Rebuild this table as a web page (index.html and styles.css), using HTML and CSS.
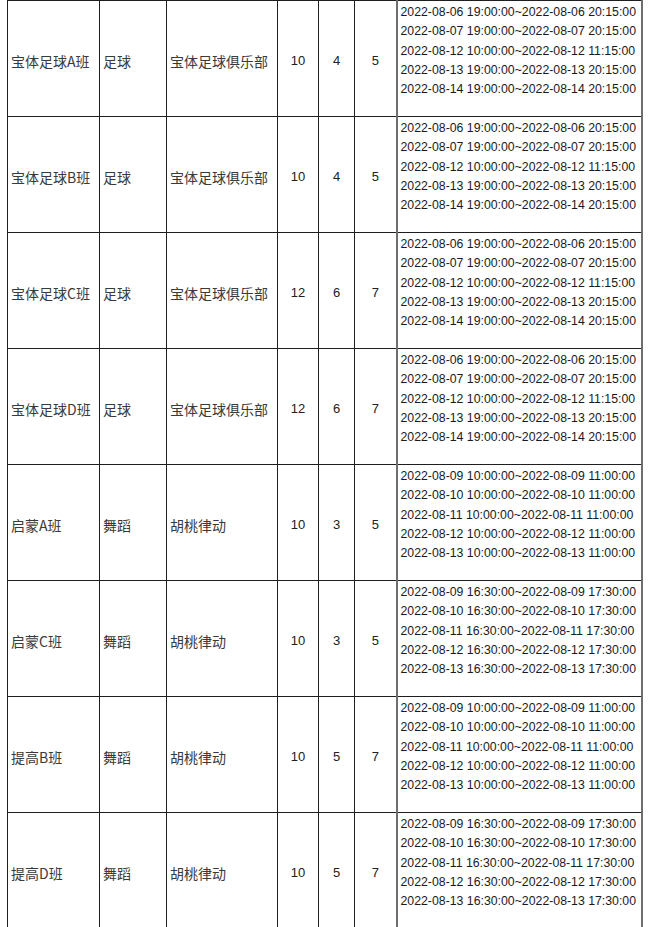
FILE: index.html
```html
<!DOCTYPE html>
<html lang="zh">
<head>
<meta charset="utf-8">
<link rel="stylesheet" href="styles.css">
</head>
<body>
<table class="schedule">
  <colgroup>
    <col class="c-name"><col class="c-type"><col class="c-club"><col class="c-num1"><col class="c-num2"><col class="c-num3"><col class="c-time">
  </colgroup>
  <tbody>
    <tr>
      <td class="txt">宝体足球A班</td><td class="txt">足球</td><td class="txt">宝体足球俱乐部</td>
      <td class="num">10</td><td class="num">4</td><td class="num">5</td>
      <td class="time"><div>2022-08-06 19:00:00~2022-08-06 20:15:00</div><div>2022-08-07 19:00:00~2022-08-07 20:15:00</div><div>2022-08-12 10:00:00~2022-08-12 11:15:00</div><div>2022-08-13 19:00:00~2022-08-13 20:15:00</div><div>2022-08-14 19:00:00~2022-08-14 20:15:00</div></td>
    </tr>
    <tr>
      <td class="txt">宝体足球B班</td><td class="txt">足球</td><td class="txt">宝体足球俱乐部</td>
      <td class="num">10</td><td class="num">4</td><td class="num">5</td>
      <td class="time"><div>2022-08-06 19:00:00~2022-08-06 20:15:00</div><div>2022-08-07 19:00:00~2022-08-07 20:15:00</div><div>2022-08-12 10:00:00~2022-08-12 11:15:00</div><div>2022-08-13 19:00:00~2022-08-13 20:15:00</div><div>2022-08-14 19:00:00~2022-08-14 20:15:00</div></td>
    </tr>
    <tr>
      <td class="txt">宝体足球C班</td><td class="txt">足球</td><td class="txt">宝体足球俱乐部</td>
      <td class="num">12</td><td class="num">6</td><td class="num">7</td>
      <td class="time"><div>2022-08-06 19:00:00~2022-08-06 20:15:00</div><div>2022-08-07 19:00:00~2022-08-07 20:15:00</div><div>2022-08-12 10:00:00~2022-08-12 11:15:00</div><div>2022-08-13 19:00:00~2022-08-13 20:15:00</div><div>2022-08-14 19:00:00~2022-08-14 20:15:00</div></td>
    </tr>
    <tr>
      <td class="txt">宝体足球D班</td><td class="txt">足球</td><td class="txt">宝体足球俱乐部</td>
      <td class="num">12</td><td class="num">6</td><td class="num">7</td>
      <td class="time"><div>2022-08-06 19:00:00~2022-08-06 20:15:00</div><div>2022-08-07 19:00:00~2022-08-07 20:15:00</div><div>2022-08-12 10:00:00~2022-08-12 11:15:00</div><div>2022-08-13 19:00:00~2022-08-13 20:15:00</div><div>2022-08-14 19:00:00~2022-08-14 20:15:00</div></td>
    </tr>
    <tr>
      <td class="txt">启蒙A班</td><td class="txt">舞蹈</td><td class="txt">胡桃律动</td>
      <td class="num">10</td><td class="num">3</td><td class="num">5</td>
      <td class="time"><div>2022-08-09 10:00:00~2022-08-09 11:00:00</div><div>2022-08-10 10:00:00~2022-08-10 11:00:00</div><div>2022-08-11 10:00:00~2022-08-11 11:00:00</div><div>2022-08-12 10:00:00~2022-08-12 11:00:00</div><div>2022-08-13 10:00:00~2022-08-13 11:00:00</div></td>
    </tr>
    <tr>
      <td class="txt">启蒙C班</td><td class="txt">舞蹈</td><td class="txt">胡桃律动</td>
      <td class="num">10</td><td class="num">3</td><td class="num">5</td>
      <td class="time"><div>2022-08-09 16:30:00~2022-08-09 17:30:00</div><div>2022-08-10 16:30:00~2022-08-10 17:30:00</div><div>2022-08-11 16:30:00~2022-08-11 17:30:00</div><div>2022-08-12 16:30:00~2022-08-12 17:30:00</div><div>2022-08-13 16:30:00~2022-08-13 17:30:00</div></td>
    </tr>
    <tr>
      <td class="txt">提高B班</td><td class="txt">舞蹈</td><td class="txt">胡桃律动</td>
      <td class="num">10</td><td class="num">5</td><td class="num">7</td>
      <td class="time"><div>2022-08-09 10:00:00~2022-08-09 11:00:00</div><div>2022-08-10 10:00:00~2022-08-10 11:00:00</div><div>2022-08-11 10:00:00~2022-08-11 11:00:00</div><div>2022-08-12 10:00:00~2022-08-12 11:00:00</div><div>2022-08-13 10:00:00~2022-08-13 11:00:00</div></td>
    </tr>
    <tr>
      <td class="txt">提高D班</td><td class="txt">舞蹈</td><td class="txt">胡桃律动</td>
      <td class="num">10</td><td class="num">5</td><td class="num">7</td>
      <td class="time"><div>2022-08-09 16:30:00~2022-08-09 17:30:00</div><div>2022-08-10 16:30:00~2022-08-10 17:30:00</div><div>2022-08-11 16:30:00~2022-08-11 17:30:00</div><div>2022-08-12 16:30:00~2022-08-12 17:30:00</div><div>2022-08-13 16:30:00~2022-08-13 17:30:00</div></td>
    </tr>
  </tbody>
</table>
</body>
</html>
```

FILE: styles.css
```css
html, body {
  margin: 0;
  padding: 0;
  background: #fff;
}
body {
  padding-left: 7px;
  overflow: hidden;
}
.schedule {
  border-collapse: collapse;
  table-layout: fixed;
  width: 635px;
  margin-top: 0;
}
.c-name { width: 92px; }
.c-type { width: 67px; }
.c-club { width: 111px; }
.c-num1 { width: 41px; }
.c-num2 { width: 36px; }
.c-num3 { width: 42px; }
.c-time { width: 245px; }
.schedule td {
  border: 1px solid #1e1e1e;
  height: 116px;
  padding: 0;
  box-sizing: border-box;
}
.schedule td.txt {
  padding-left: 3px;
  padding-top: 4px;
  vertical-align: middle;
  font-family: "Noto Sans CJK SC", "Liberation Sans", sans-serif;
  font-size: 14px;
  color: #3a3a3a;
  white-space: nowrap;
}
.schedule td.num {
  text-align: center;
  vertical-align: middle;
  padding-top: 4px;
  font-family: "Liberation Sans", sans-serif;
  font-size: 13px;
  color: #222;
}
.schedule td.time {
  vertical-align: top;
  padding: 2px 0 0 3px;
  font-family: "Liberation Sans", sans-serif;
  font-size: 12.3px;
  line-height: 19.3px;
  color: #1a1a1a;
  white-space: nowrap;
  border-left: 2px solid #6e6e6e;
  border-right: 2px solid #6e6e6e;
}
```
